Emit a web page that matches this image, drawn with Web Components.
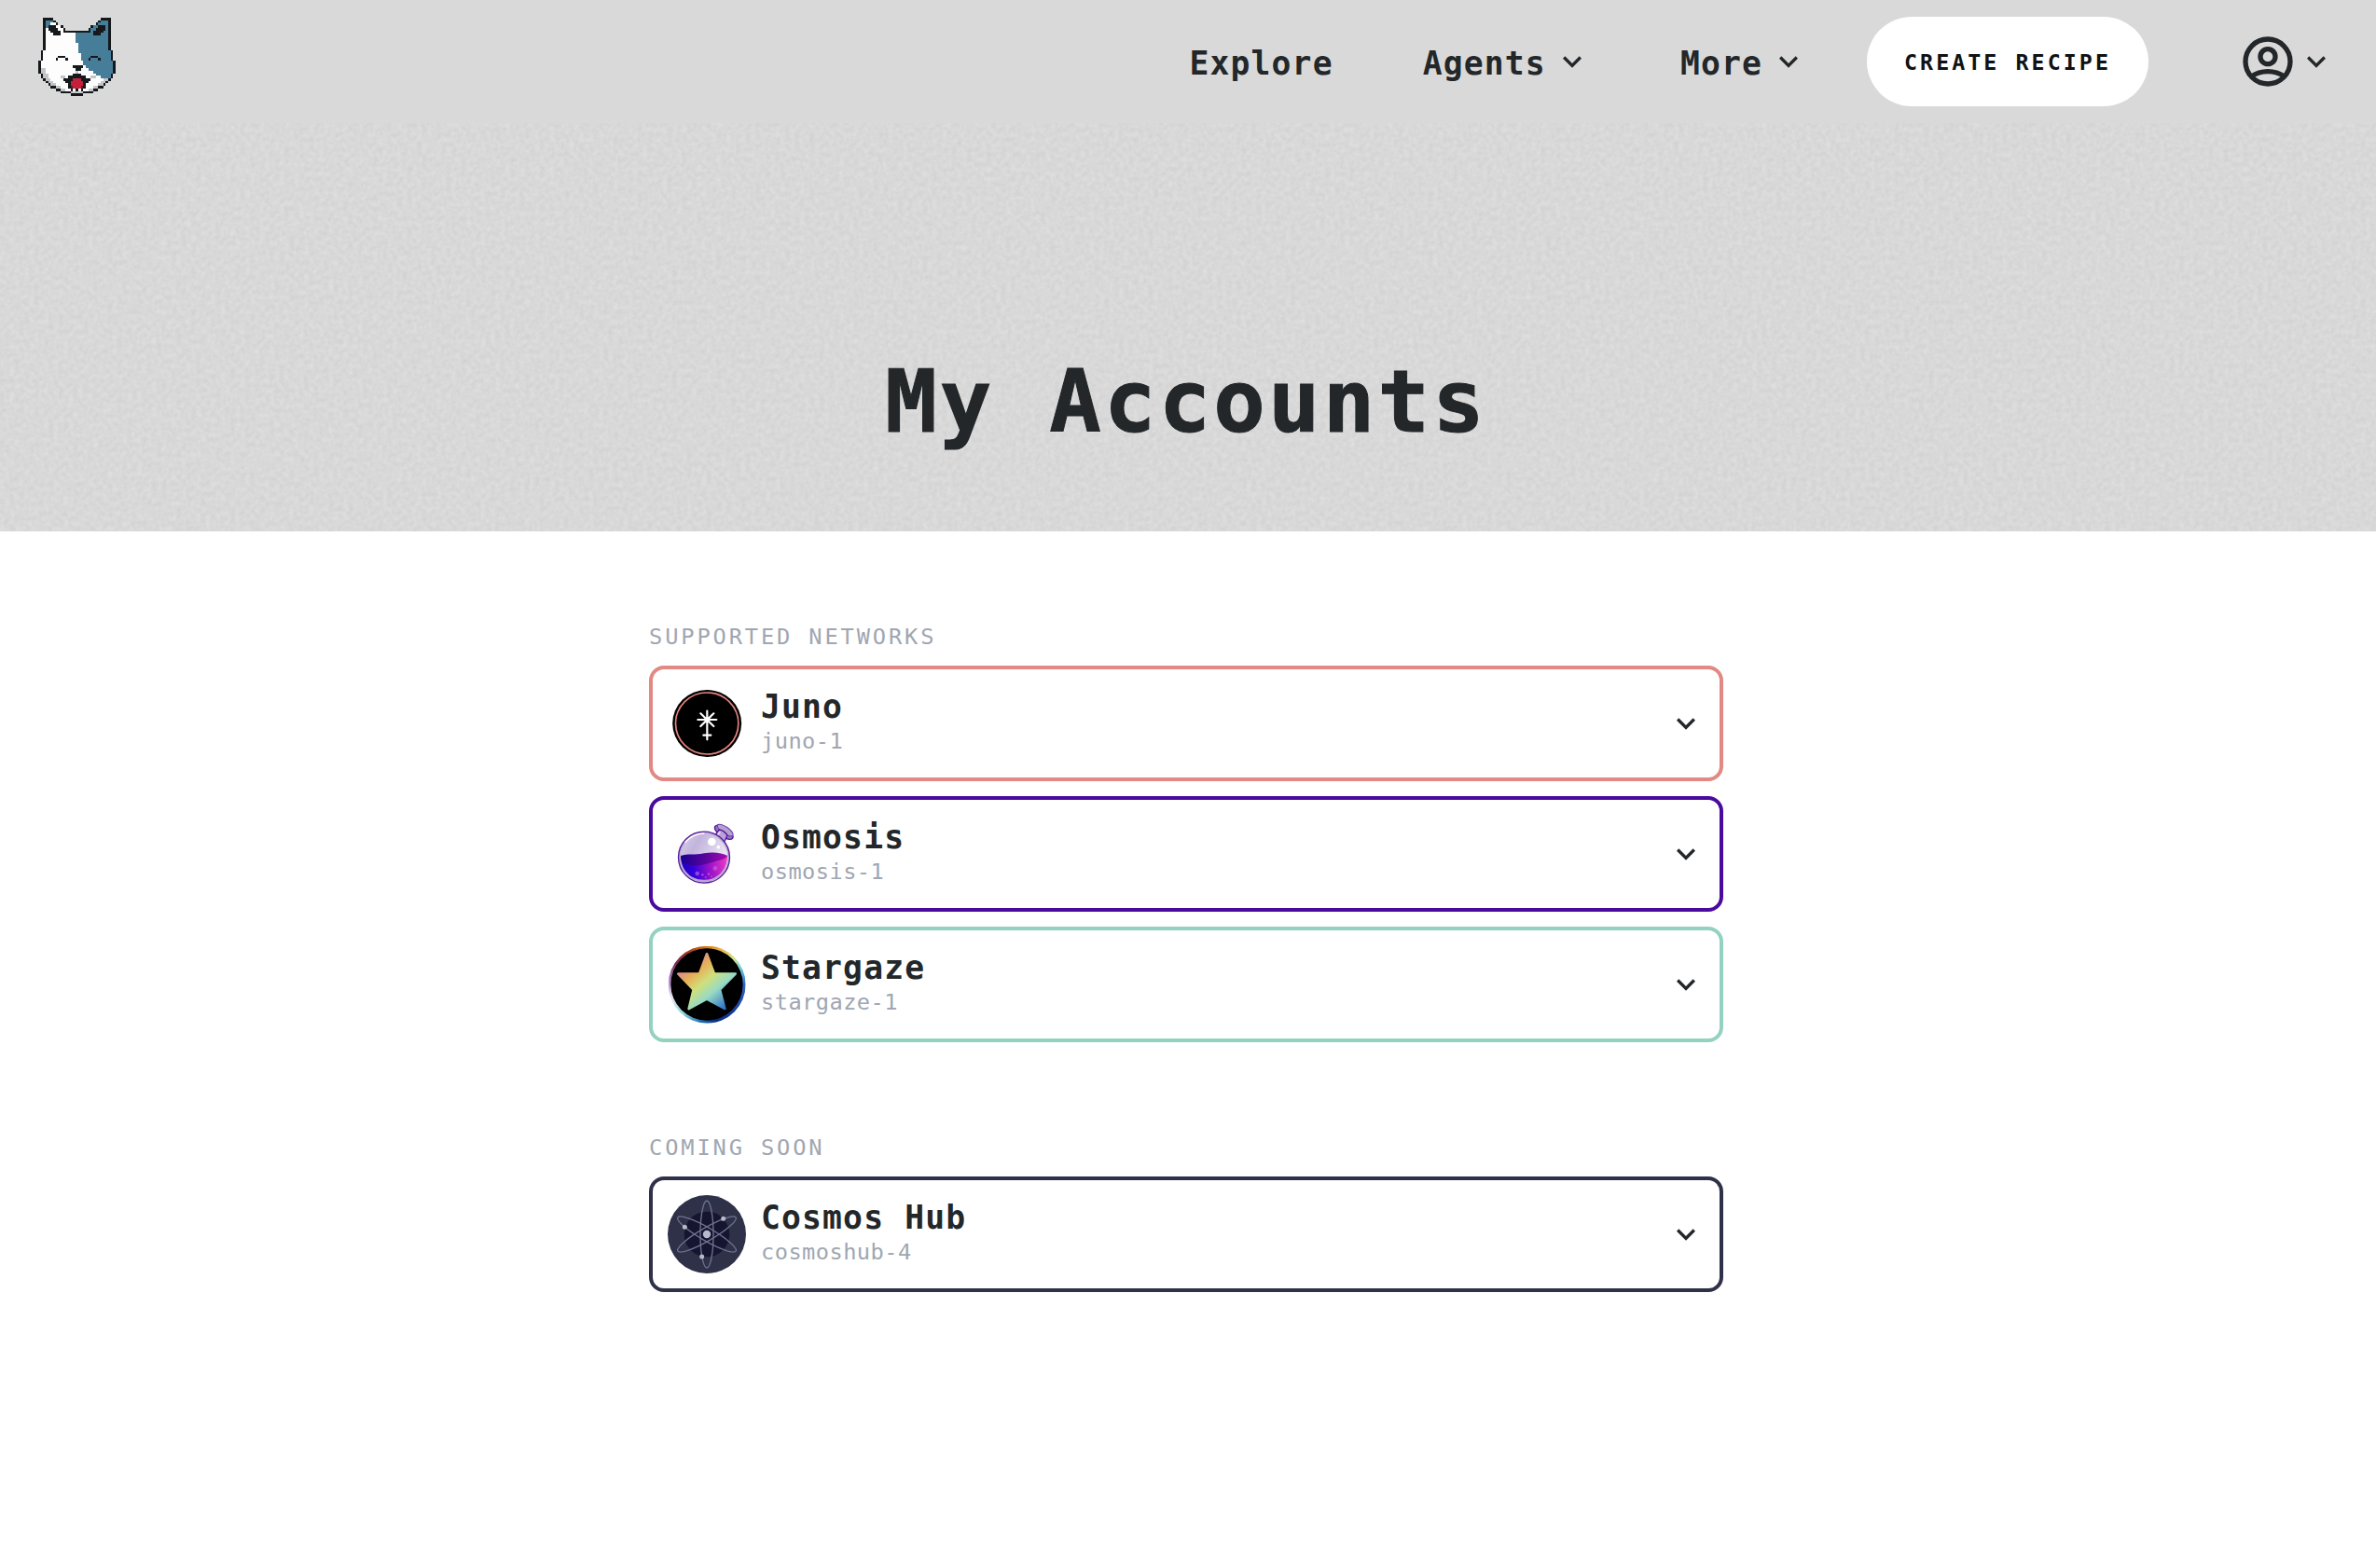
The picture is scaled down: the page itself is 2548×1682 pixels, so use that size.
<!DOCTYPE html>
<html lang="en">
<head>
<meta charset="utf-8">
<title>My Accounts</title>
<style>
  body { margin: 0; background: #fff; color: #232729; font-family: "DejaVu Sans Mono", "Liberation Mono", monospace; }
</style>
</head>
<body>
<accounts-page></accounts-page>
<script>
const define = (name, html, setup) => {
  const tpl = document.createElement('template');
  tpl.innerHTML = html;
  customElements.define(name, class extends HTMLElement {
    constructor() {
      super();
      this.attachShadow({ mode: 'open' }).append(tpl.content.cloneNode(true));
    }
    connectedCallback() { if (setup) setup(this, this.shadowRoot); }
  });
};

define('chevron-icon', `
<style>:host{display:block;flex:none;width:40px;height:40px}svg{display:block}</style>
<svg width="40" height="40" viewBox="0 0 24 24" fill="#232729"><path d="M7.41 8.59 12 13.17l4.59-4.58L18 10l-6 6-6-6z"/></svg>`);

define('account-icon', `
<style>:host{display:block;flex:none;width:64px;height:64px}svg{display:block}</style>
<svg width="64" height="64" viewBox="0 0 24 24" fill="none" stroke="#232729" stroke-width="2"><circle cx="12" cy="12" r="9"/><circle cx="12" cy="10" r="3"/><path d="M5.3 18.1Q8.2 16 12 16T18.7 18.1"/></svg>`);

// The cat is a 31 x 31 pixel drawing, kept as horizontal runs.
define('cat-logo', `
<style>:host{display:block;flex:none;width:83px;height:84px}svg{display:block}</style>
<svg width="83" height="84" viewBox="0 0 31 31" preserveAspectRatio="none" shape-rendering="crispEdges"></svg>`, (el, root) => {
  const K = '#15191c', W = '#fdfdfd', B = '#467d99', G = '#c4c6c9', R = '#c51f3b', D = '#6e1024';
  const left = [2,2,2,2,2,2,2,2,2,2,2,2,2,1,1,1,1,0,0,0,0,0,1,1,2,3,4,5,7,9,13];
  const split = r => r < 10 ? 15 : r < 14 ? 16 : r < 17 ? 17 : r < 19 ? 18 : [19,20,22,23,25,27][r - 19] ?? 40;
  const runs = [];
  const put = (r, c, n, f) => runs.push(`<rect x="${c}" y="${r}" width="${n}" height="1" fill="${f}"/>`);
  for (let r = 5; r < 31; r++) {
    const a = left[r], b = 30 - a, s = Math.min(Math.max(split(r), a), b + 1);
    put(r, a, s - a, W);
    if (b + 1 > s) put(r, s, b + 1 - s, B);
    const n = r > 23 && r < 30 ? left[r + 1] - a : 1;
    if (r > 19 && r < 30) { put(r, a + n, 2, G); put(r, b - n - 1, 2, r > 23 ? G : B); }
    put(r, a, n, K); put(r, b - n + 1, n, K);
  }
  put(30, 13, 5, K);
  [[0,2,4],[1,2,5],[2,2,6],[3,2,8],[4,2,9]].forEach(([r, c, n]) => {
    put(r, c, n, K); put(r, 31 - c - n, n, K);
    if (r) {
      put(r, c + 1, n - 2, W); put(r, 32 - c - n, n - 2, B);
    }
  });
  put(1,3,3,B); put(2,3,2,B); put(3,3,1,B);
  [[3,4,3],[4,4,4],[5,5,4],[6,6,3]].forEach(([r, c, n]) => { put(r, c, n, K); put(r, 31 - c - n, n, K); });
  put(5,11,9,K); put(5,10,1,K); put(5,20,1,K);
  put(15,8,3,K); put(16,7,1,K); put(16,11,1,K); put(15,21,3,K); put(16,20,1,K); put(16,24,1,K);
  put(19,14,4,K); put(20,15,2,K); put(21,15,1,G);
  put(22,14,3,K); put(23,9,2,G); put(23,12,7,K); put(23,21,2,G);
  put(24,10,2,K); put(24,12,7,K); put(24,19,2,K); put(24,14,3,R);
  put(25,11,9,K); put(25,13,5,R); put(26,12,7,K); put(26,13,5,R);
  put(27,12,7,K); put(27,14,3,R); put(27,13,1,D); put(27,17,1,D);
  put(28,13,5,K); put(28,14,1,W); put(28,16,1,W); put(29,13,5,G);
  root.querySelector('svg').innerHTML = runs.join('');
});

define('nav-link', `
<style>
  :host{display:flex;align-items:center;gap:8px;height:132px;font-weight:700;font-size:34.7px}
  span{line-height:40px;padding-top:4px;letter-spacing:calc(22.03px - 1ch);white-space:nowrap}
</style><span><slot></slot></span><slot name="icon"></slot>`);

define('pill-button', `
<style>
  :host{display:block;flex:none}
  button{all:unset;box-sizing:border-box;display:flex;align-items:center;justify-content:center;width:302px;height:96px;border-radius:48px;background:#fff;color:#101214;font-weight:700;font-size:23.3px;letter-spacing:calc(17.08px - 1ch);white-space:nowrap}
</style><button><slot></slot></button>`);

define('site-nav', `
<style>
  :host{display:block;background:#d9d9d9f0}
  nav{display:flex;align-items:center;height:132px;padding:0 44px 0 41px}
  cat-logo{margin:-10px auto 0 0}
  .links{display:flex;align-items:center;gap:96px;margin-right:64px}
  .user{display:flex;align-items:center;margin-left:96px}
</style>
<nav>
  <cat-logo></cat-logo>
  <div class="links">
    <nav-link>Explore</nav-link>
    <nav-link>Agents<chevron-icon slot="icon"></chevron-icon></nav-link>
    <nav-link>More<chevron-icon slot="icon"></chevron-icon></nav-link>
  </div>
  <pill-button>CREATE RECIPE</pill-button>
  <div class="user"><account-icon></account-icon><chevron-icon></chevron-icon></div>
</nav>`);

define('page-hero', `
<style>
  :host{display:grid;height:570px;background:#d8d8d8;overflow:hidden}
  svg,.content{grid-area:1/1}
  .content{position:relative;display:flex;flex-direction:column}
  h1{margin:239px 0 0;padding-right:4px;text-align:center;font-size:92.3px;line-height:120px;letter-spacing:calc(58.7px - 1ch);font-weight:700;-webkit-text-stroke:1px #232729}
</style>
<svg width="2548" height="570" aria-hidden="true">
  <filter id="paper" x="0" y="0" width="100%" height="100%" color-interpolation-filters="sRGB">
    <feTurbulence type="fractalNoise" baseFrequency="0.19" numOctaves="2" seed="4" stitchTiles="stitch"/>
    <feColorMatrix values=".07 0 0 0 .813 .07 0 0 0 .813 .07 0 0 0 .813 0 0 0 0 1"/>
  </filter>
  <rect width="2548" height="570" filter="url(#paper)"/>
</svg>
<div class="content"><slot name="nav"></slot><h1><slot></slot></h1></div>`);

const logos = {
  juno: `<svg viewBox="18 12 252 252"><ellipse cx="144.500" cy="138" rx="111" ry="108"/><ellipse cx="144.500" cy="138" rx="101" ry="99" fill="none" stroke="#e5847d" stroke-width="5"/>
    <g stroke="#fff" stroke-width="6.500" stroke-linecap="round"><path d="M145 98v92M115 126h60M124 106l42 41M166 106l-42 41M133 176h24"/></g><circle cx="145" cy="126" r="8" fill="#fff"/></svg>`,
  osmosis: `<svg viewBox="18 12 252 252"><defs>
    <linearGradient id="glass" x1="0" y1="0" x2="1" y2=".6"><stop stop-color="#d9d0ee"/><stop offset=".35" stop-color="#c2b4dc"/><stop offset="1" stop-color="#f4effa"/></linearGradient>
    <linearGradient id="liq" x1="0" y1=".3" x2="1" y2=".2"><stop stop-color="#1c00c4"/><stop offset=".25" stop-color="#3500dc"/><stop offset=".6" stop-color="#9a12c8"/><stop offset="1" stop-color="#f03cc4"/></linearGradient>
    <linearGradient id="wave"><stop stop-color="#1b0093"/><stop offset=".5" stop-color="#56049c"/><stop offset="1" stop-color="#a60fb0"/></linearGradient></defs>
    <g transform="rotate(34 201 65)"><ellipse cx="201" cy="69" rx="34" ry="15" fill="#9079b7" stroke="#59189f" stroke-width="4"/><ellipse cx="201" cy="61" rx="30" ry="11" fill="#b3a2cf" stroke="#6d3bad" stroke-width="3"/></g>
    <path d="M171 77l13-17q15 2 26 18l-11 24z" fill="#b9a3d6" stroke="#59189f" stroke-width="4"/>
    <path d="M186 67l-9 13" stroke="#e1d5ef" stroke-width="6"/>
    <circle cx="135" cy="149" r="82.500" fill="#b7afca" stroke="#59189f" stroke-width="4"/>
    <circle cx="135" cy="148" r="76" fill="url(#glass)"/><path d="M73 102Q99 72 136 72" fill="none" stroke="#fff" stroke-width="4"/>
    <path d="M60 145c24 10 50 1 75-2 30-4 62-3 75 4 0 43-34 77-75 77s-75-34-75-79z" fill="url(#liq)"/>
    <path d="M60 144c23-8 43-1 75-8 28-6 58-2 76 8-7 12-25 13-43 19-33 12-78 19-104 3z" fill="url(#wave)"/>
    <path d="M73 195c30 39 97 38 125-3" fill="none" stroke="#b8a4d8" stroke-width="4"/>
    <circle cx="160" cy="99" r="13" fill="#fff"/><circle cx="181" cy="116" r="5.500" fill="#fff"/>
    <g fill="#c065e6" fill-opacity=".65"><circle cx="113" cy="201" r="7"/><circle cx="171" cy="184" r="7"/><circle cx="130" cy="205" r="4"/><circle cx="150" cy="203" r="4"/><circle cx="140" cy="213" r="3"/><circle cx="159" cy="211" r="3"/></g></svg>`,
  stargaze: `<svg viewBox="18 18 252 252"><defs>
    <linearGradient id="star" x1=".1" y1=".15" x2=".85" y2="1"><stop offset=".02" stop-color="#d67fa0"/><stop offset=".25" stop-color="#e6b057"/><stop offset=".45" stop-color="#cfe07c"/><stop offset=".66" stop-color="#98dac4"/><stop offset="1" stop-color="#2468c8"/></linearGradient></defs>
    <foreignObject x="19.500" y="19.500" width="249" height="249"><div style="width:249px;height:249px;border-radius:50%;background:conic-gradient(#d97a1b,#e7bd50 25deg,#d5e38a 45deg,#6fcbe0 65deg,#2f66c8 90deg,#1b3f9c 130deg,#0b2e85 165deg,#2472b6 190deg,#8fd6dc 220deg,#e9e6f1 250deg,#a477c3 280deg,#742b55 305deg,#9e3a22 330deg,#d97a1b)"></div></foreignObject>
    <circle cx="144" cy="144" r="116"/>
    <path d="M144 46L168 110H236L186 161 202 222 144 191 86 222 101 161 52 110H120Z" fill="url(#star)" stroke="url(#star)" stroke-width="8" stroke-linejoin="round"/></svg>`,
  cosmos: `<svg viewBox="18 18 252 252"><circle cx="144" cy="144" r="126" fill="#2e3148"/><circle cx="144" cy="144" r="73" fill="#15152f"/>
    <g fill="none" stroke="#6f7390" stroke-width="4"><ellipse cx="144" cy="144" rx="21" ry="108"/><ellipse cx="144" cy="144" rx="21" ry="108" transform="rotate(60 144 144)"/><ellipse cx="144" cy="144" rx="21" ry="108" transform="rotate(-60 144 144)"/></g>
    <g fill="#b8bacb"><circle cx="144" cy="144" r="12.500"/><circle cx="197" cy="94" r="7.500"/><circle cx="73" cy="121" r="7.500"/><circle cx="128" cy="216" r="7.500"/></g></svg>`
};

define('network-card', `
<style>
  :host{box-sizing:border-box;display:flex;align-items:center;gap:16px;width:1152px;height:124px;padding:0 16px;border:4px solid var(--accent);border-radius:16px}
  .logo{flex:none;width:84px;height:84px}
  .text{flex:1;align-self:flex-start;padding-top:20px}
  .name{font-weight:700;font-size:34.7px;line-height:40px;letter-spacing:calc(22.03px - 1ch)}
  .chain{margin-top:1px;color:#a0a6b2;font-size:23.7px;line-height:32px;letter-spacing:calc(14.69px - 1ch)}
</style>
<div class="logo"></div>
<div class="text"><div class="name"><slot></slot></div><div class="chain"><slot name="chain"></slot></div></div>
<chevron-icon></chevron-icon>`, (el, root) => {
  root.querySelector('.logo').innerHTML = logos[el.getAttribute('logo')];
});

define('network-group', `
<style>
  :host{display:block;margin-top:93px}
  h2{margin:0 0 11px;color:#a0a6b2;font-weight:400;font-size:23.7px;line-height:40px;letter-spacing:calc(17.13px - 1ch)}
  .list{display:flex;flex-direction:column;gap:16px}
</style>
<h2><slot name="label"></slot></h2><div class="list"><slot></slot></div>`);

define('accounts-page', `
<style>
  :host{display:block;min-height:1682px;background:#fff}
  main{display:flow-root;width:1152px;margin:0 auto;padding-right:4px}
</style>
<page-hero><site-nav slot="nav"></site-nav>My Accounts</page-hero>
<main>
  <network-group>
    <span slot="label">SUPPORTED NETWORKS</span>
    <network-card logo="juno" style="--accent:#e18982">Juno<span slot="chain">juno-1</span></network-card>
    <network-card logo="osmosis" style="--accent:#4a0a9e">Osmosis<span slot="chain">osmosis-1</span></network-card>
    <network-card logo="stargaze" style="--accent:#93d2c0">Stargaze<span slot="chain">stargaze-1</span></network-card>
  </network-group>
  <network-group>
    <span slot="label">COMING SOON</span>
    <network-card logo="cosmos" style="--accent:#2e3148">Cosmos Hub<span slot="chain">cosmoshub-4</span></network-card>
  </network-group>
</main>`);
</script>
</body>
</html>
